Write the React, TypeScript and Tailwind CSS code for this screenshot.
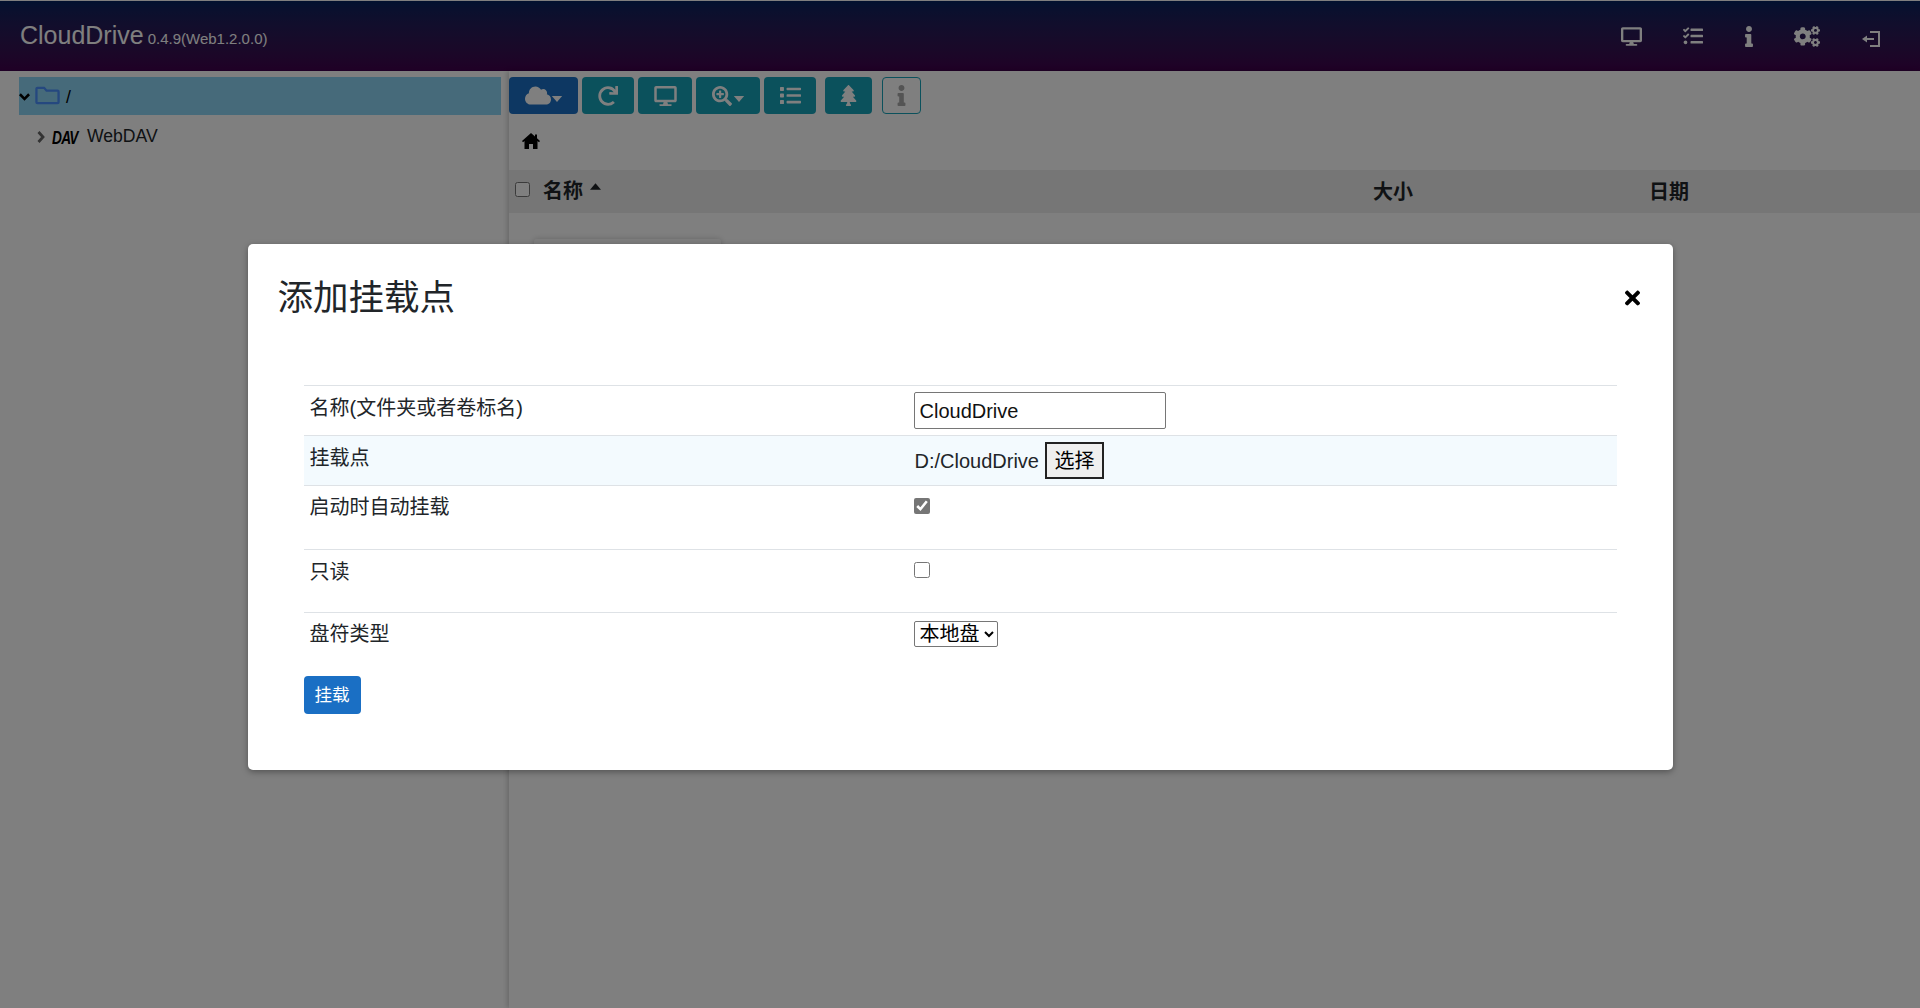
import type { ReactNode } from 'react'
import { FaCloud, FaCogs, FaDesktop, FaInfo, FaList, FaRedo, FaSearchPlus, FaTasks, FaTimes, FaTree } from 'react-icons/fa'

const sans = "font-['Liberation_Sans','Noto_Sans_CJK_SC',sans-serif]"

function ExitIcon() {
  return (
    <svg viewBox="0 0 18 16" className="w-[18px] h-[16px] mt-[5px] ml-[42px] text-white" fill="none" stroke="currentColor" strokeWidth="2">
      <path d="M8 1h9v14H8" />
      <path d="M2 8h10" />
      <path d="M5 4.500v7L0 8z" fill="currentColor" stroke="none" />
    </svg>
  )
}

function HomeIcon() {
  return (
    <svg viewBox="0 0 18 16" className="w-[18px] h-[16px] fill-black">
      <path d="M9 0l4 3.500V1.500h2v3.800L18 8l-1 1.200-1.500-1.300V16H11v-5H7v5H2.500V7.900L1 9.200 0 8z" />
    </svg>
  )
}

function ToolButton({ width, color, children }: { width: string; color: string; children: ReactNode }) {
  return <button className={`${width} ${color} h-[37px] rounded-[4px] flex items-center justify-center text-white`}>{children}</button>
}

export default function App() {
  return (
    <div className={`relative h-screen overflow-hidden bg-white text-[20px] text-[#212529] ${sans}`}>
      {/* Navbar */}
      <div className="h-[71px] border-t border-white bg-gradient-to-b from-[#04235f] to-[#40004c] flex items-center justify-between pl-[20px] pr-[40px]">
        <div className="flex items-baseline text-white">
          <span className="text-[25px]">CloudDrive</span>
          <span className="text-[15px] ml-[4px]">0.4.9(Web1.2.0.0)</span>
        </div>
        <div className="flex items-center text-white">
          <FaDesktop className="w-[21px] h-[19px]" />
          <FaTasks className="w-[20px] h-[20px] ml-[41px]" />
          <FaInfo className="w-[8px] h-[21px] ml-[42px]" />
          <FaCogs className="w-[26px] h-[21px] ml-[41px]" />
          <ExitIcon />
        </div>
      </div>

      <div className="flex h-[937px]">
        {/* Tree */}
        <div className="w-[509px] shrink-0 pt-[6px] pl-[19px] pr-[8px]">
          <div className="h-[38px] bg-[#8dd5f5] flex items-center">
            <svg viewBox="0 0 12 8" className="w-[11px] h-[8px] mt-[2px]" fill="none" stroke="#000" strokeWidth="2.8">
              <path d="M1 1l5 5 5-5" />
            </svg>
            <svg viewBox="0 0 26 19" className="w-[25px] h-[19px] ml-[5px] -mt-[1px]" fill="none" stroke="#4a90ff" strokeWidth="2.4">
              <path d="M1.500 16.500V2.500a1 1 0 0 1 1-1h7l2.500 3h11.500a1 1 0 0 1 1 1v11a1 1 0 0 1-1 1h-21a1 1 0 0 1-1-1z" />
            </svg>
            <span className="ml-[6px] mt-[3px] text-[17.6px] leading-none text-black">/</span>
          </div>
          <div className="h-[38px] flex items-center pl-[18px] pt-[5px]">
            <svg viewBox="0 0 8 12" className="w-[8px] h-[12px]" fill="none" stroke="#666" strokeWidth="2.8">
              <path d="M1.500 1l4.500 5-4.500 5" />
            </svg>
            <span className="ml-[7px] mt-[2px] w-[35px] text-[19px] leading-none font-bold italic tracking-[-1px] text-black inline-block origin-left scale-x-[0.72]">DAV</span>
            <span className="text-[17.6px] -mt-[1px]">WebDAV</span>
          </div>
        </div>

        {/* Main */}
        <div className="flex-1 shadow-[-2px_0_5px_rgba(0,0,0,0.18)]">
          <div className="flex pt-[6px] gap-[4px]">
            <ToolButton width="w-[69px]" color="bg-[#1a6fc4]">
              <FaCloud className="w-[26px] h-[21px]" />
              <svg viewBox="0 0 12 7" className="w-[12px] h-[6px] mt-[7px] fill-current"><path d="M0 0h12L6 7z" /></svg>
            </ToolButton>
            <ToolButton width="w-[52px]" color="bg-[#17a2b8]"><FaRedo className="w-[20px] h-[20px]" /></ToolButton>
            <ToolButton width="w-[54px]" color="bg-[#17a2b8]"><FaDesktop className="w-[23px] h-[20px]" /></ToolButton>
            <ToolButton width="w-[64px]" color="bg-[#17a2b8]">
              <FaSearchPlus className="w-[20px] h-[20px]" />
              <svg viewBox="0 0 12 7" className="w-[12px] h-[6px] mt-[7px] ml-[1px] fill-current"><path d="M0 0h12L6 7z" /></svg>
            </ToolButton>
            <ToolButton width="w-[52px]" color="bg-[#17a2b8]"><FaList className="w-[21px] h-[21px]" /></ToolButton>
            <div className="w-[1px]" />
            <ToolButton width="w-[47px]" color="bg-[#17a2b8]"><FaTree className="w-[17px] h-[21px]" /></ToolButton>
            <div className="w-[2px]" />
            <button className="w-[39px] h-[37px] rounded-[4px] border border-[#17a2b8] flex items-center justify-center text-[#a8a8a8]">
              <FaInfo className="w-[9px] h-[21px]" />
            </button>
          </div>
          <div className="h-[56px] flex items-center pl-[13px] pb-[3px]">
            <HomeIcon />
          </div>
          <div className="h-[43px] bg-[#ececec] flex items-center font-bold text-[#212529]">
            <input type="checkbox" className="ml-[6px] w-[15px] h-[15px] -mt-[5px]" />
            <span className="ml-[13px] -mt-[1px]">名称</span>
            <span className="ml-[7px] self-start mt-[13px] h-[7px]">
              <svg viewBox="0 0 12 7" className="block w-[11px] h-[7px] fill-current"><path d="M6 0l6 7H0z" /></svg>
            </span>
            <span className="ml-[772px]">大小</span>
            <span className="ml-[236px]">日期</span>
          </div>
          <div className="ml-[25px] mt-[26px] w-[187px] h-[40px] bg-[#fafafa] rounded-[2px] shadow-[0_0_6px_rgba(0,0,0,0.2)]" />
        </div>
      </div>

      {/* Modal */}
      <div className="absolute inset-0 bg-black/50 flex justify-center pt-[244px]">
        <div className="w-[1425px] h-[526px] bg-white rounded-[5px] shadow-[0_2px_6px_rgba(0,0,0,0.35)] flex flex-col">
          <div className="flex items-center justify-between pl-[30px] pr-[33px] pt-[32px]">
            <h2 className="text-[35.5px] leading-[44px]">添加挂载点</h2>
            <FaTimes className="text-black w-[15px] h-[22px]" />
          </div>
          <div className="mx-[56px] mt-[65px]">
            <div className="grid grid-cols-[610px_1fr] h-[50px] border-t border-[#dee2e6]">
              <div className="pl-[6px] pt-[7px]">名称(文件夹或者卷标名)</div>
              <div className="pt-[6px]">
                <input
                  defaultValue="CloudDrive"
                  className="block w-[252px] h-[37px] border border-[#767676] rounded-[2px] px-[5px] pt-[2px] text-[#111]"
                />
              </div>
            </div>
            <div className="grid grid-cols-[610px_1fr] h-[50px] border-t border-[#dee2e6] bg-[#f3fafe]">
              <div className="pl-[6px] pt-[7px]">挂载点</div>
              <div className="pt-[7px] flex items-start">
                <span className="leading-[37px] ml-[1px]">D:/CloudDrive</span>
                <button className="-mt-[1px] ml-[6px] w-[59px] h-[37px] border-2 border-[#222] bg-[#efefef] text-black">选择</button>
              </div>
            </div>
            <div className="grid grid-cols-[610px_1fr] h-[64px] border-t border-[#dee2e6]">
              <div className="pl-[6px] pt-[6px]">启动时自动挂载</div>
              <div className="pt-[12px]">
                <input type="checkbox" defaultChecked className="block w-[16px] h-[16px] accent-[#767676]" />
              </div>
            </div>
            <div className="grid grid-cols-[610px_1fr] h-[63px] border-t border-[#dee2e6]">
              <div className="pl-[6px] pt-[7px]">只读</div>
              <div className="pt-[12px]">
                <input type="checkbox" className="block w-[16px] h-[16px]" />
              </div>
            </div>
            <div className="grid grid-cols-[610px_1fr] h-[64px] border-t border-[#dee2e6]">
              <div className="pl-[6px] pt-[6px]">盘符类型</div>
              <div className="pt-[8px]">
                <select defaultValue="local" className="block w-[84px] h-[26px] pl-[1px] border border-[#767676] rounded-[2px] text-black text-[20px] leading-none">
                  <option value="local">本地盘</option>
                </select>
              </div>
            </div>
            <button className="w-[57px] h-[38px] rounded-[4px] bg-[#1a6fc4] text-white text-[17.6px]">挂载</button>
          </div>
        </div>
      </div>
    </div>
  )
}
